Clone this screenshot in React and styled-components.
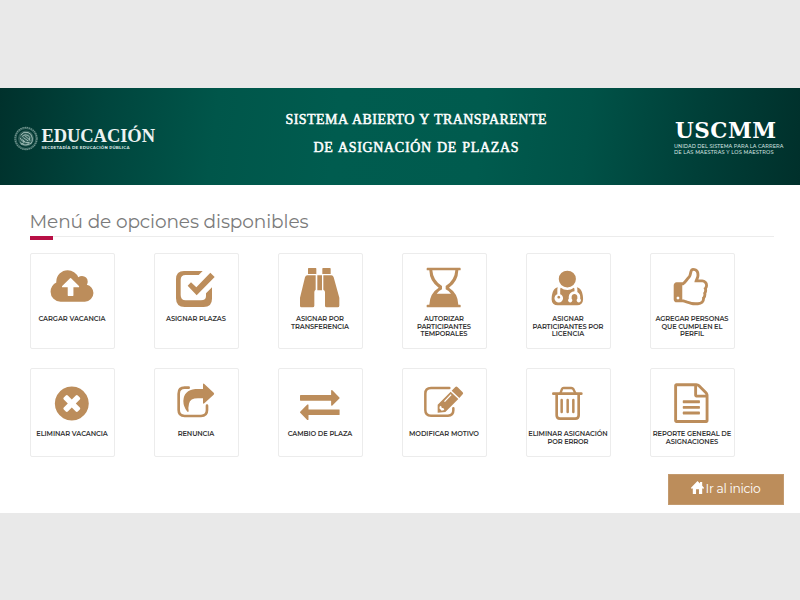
import React, { useLayoutEffect, useRef } from "react";
import styled, { createGlobalStyle } from "styled-components";

const TAN = "#bc8d5b";
const SANS = '"Montserrat", "Inter", "Open Sans", sans-serif';
const SERIF = '"Liberation Serif", serif';

const GlobalStyle = createGlobalStyle`
  *, *::before, *::after { box-sizing: border-box; }
  body { margin: 0; background: #e9e9e9; }
`;

const Page = styled.div`
  width: 800px;
  height: 600px;
  padding-top: 88px;
  overflow: hidden;
  background: #e9e9e9;
`;

const Header = styled.header`
  display: flex;
  height: 97px;
  padding: 0 16px 0 14px;
  background: linear-gradient(97deg, #00312c 0%, #00453d 13%, #00564a 27%, #005c4f 42%, #005b4e 60%, #005247 73%, #003f38 87%, #00302b 100%);
  color: #fff;
`;

const Brand = styled.div`
  display: flex;
  width: 190px;
  padding-top: 38px;
  gap: 3.5px;
`;

const Seal = styled.svg`
  width: 24px;
  height: 25px;
  flex: none;
  color: #9cbab4;
`;

const BrandText = styled.div`
  display: flex;
  flex-direction: column;
`;

const BrandName = styled.div`
  height: 19px;
  padding-top: 1px;
  font: 700 18.5px/19px ${SERIF};
  color: #edf3f2;
`;

const BrandTag = styled.div`
  height: 5px;
  font: 700 4px/5px ${SANS};
  color: #dce8e6;
`;

const Title = styled.h1`
  display: flex;
  flex-direction: column;
  align-items: center;
  flex: 1;
  margin: 0;
  padding: 18px 0 0;
  font: 400 14px/28px ${SERIF};
  word-spacing: 1px;
  -webkit-text-stroke: 0.5px #fff;
`;

const Unit = styled.div`
  width: 156px;
  padding: 30px 0 0 46px;
`;

const UnitName = styled.div`
  height: 26px;
  padding-left: 1px;
  font: 700 21.5px/25px "DejaVu Serif", serif;
`;

const UnitTag = styled.div`
  display: flex;
  flex-direction: column;
  font: 500 5px/5.6px ${SANS};
  color: #d5e3e0;
`;

const Content = styled.main`
  height: 328px;
  padding: 24px 26.4px 0 29.5px;
  background: #fff;
`;

const Heading = styled.h2`
  height: 28px;
  margin: 0;
  border-bottom: 1px solid #ececec;
  font: 400 18.5px/25px ${SANS};
  color: #7b7b7b;
`;

const Accent = styled.div`
  width: 23px;
  height: 4px;
  margin-top: -1px;
  background: #b80f45;
`;

const Grid = styled.div`
  display: grid;
  grid-template-columns: repeat(6, 85px);
  grid-template-rows: 96px 89px;
  gap: 19px 39px;
  margin-top: 13px;
`;

const Card = styled.button`
  display: flex;
  flex-direction: column;
  align-items: center;
  padding: 10px 0 0;
  border: 1px solid #ececec;
  border-radius: 2px;
  background: #fff;
  color: ${TAN};
`;

const Icon = styled.svg`
  width: 48px;
  height: 48px;
  flex: none;
  fill: currentColor;
`;

const Label = styled.span`
  display: flex;
  flex-direction: column;
  align-items: center;
  margin-top: 4.4px;
  font: 600 6.7px/7.2px ${SANS};
  color: #333;
`;

const Actions = styled.div`
  display: flex;
  justify-content: flex-end;
  margin: 17px -10px 0 0;
`;

const HomeButton = styled.button`
  display: flex;
  justify-content: center;
  width: 116px;
  height: 31px;
  padding: 6px 0 0;
  gap: 2px;
  border: 1px solid #c39a6e;
  background: ${TAN};
  color: #fff;
  font: 400 12.3px/15px ${SANS};
`;

const HomeIcon = styled.svg`
  width: 13px;
  height: 13px;
  fill: #fff;
`;

const FitSpan = styled.span`
  display: block;
  width: max-content;
  white-space: nowrap;
`;

// Tracks a single line of text so that it spans the given width.
function Fit({ width, children }) {
  const ref = useRef(null);
  useLayoutEffect(() => {
    const el = ref.current;
    el.style.letterSpacing = "0px";
    const natural = el.getBoundingClientRect().width;
    const gap = (width - natural) / (children.length - 1);
    el.style.letterSpacing = `${gap}px`;
    el.style.marginRight = `${-gap}px`;
  }, [width, children]);
  return <FitSpan ref={ref}>{children}</FitSpan>;
}

const icons = {
  cloud: (
    <path transform="translate(3.4 10) scale(.067)" d="M1344 864q0-14-9-23l-352-352q-9-9-23-9t-23 9l-351 351q-10 12-10 24 0 14 9 23t23 9h224v352q0 13 9.5 22.5t22.5 9.5h192q13 0 22.5-9.5t9.5-22.5v-352h224q13 0 22.5-9.5t9.5-22.5zm640 288q0 159-112.5 271.5t-271.5 112.5h-1088q-185 0-316.5-131.5t-131.5-316.5q0-130 70-240t188-165q-2-30-2-43 0-212 150-362t362-150q156 0 285.5 87t188.5 231q71-62 166-62 106 0 181 75t75 181q0 76-41 138 130 31 213.5 135.5t83.5 238.5z" />
  ),
  check: (
    <>
      <path d="M36 21H92L80 33H41Q26 33 26 48V93Q26 109 41 109H87Q102 109 102 96V88L120 70V104Q120 129 95 129H38Q12 129 12 103V46Q12 21 36 21Z" />
      <path d="M47 65L57 55L73 70L115 26L128 39L74 94Z" />
    </>
  ),
  binoculars: (
    <path d="M38 12h21q2 0 2 2v16H36V14q0-2 2-2zM81 12h21q2 0 2 2v16H79V14q0-2 2-2zM34 34H59V77Q55 79 55 84V125Q55 130 50 130H16Q12 130 12 125V101L27 40Q29 34 34 34zM64 34H78V79H64zM82 34H106Q111 34 113 40L130 101V125Q130 130 125 130H92Q87 130 87 125V84Q87 79 82 77z" />
  ),
  hourglass: (
    <path fillRule="evenodd" d="M22 11H120Q122 11 122 14V17Q122 19 120 19H115Q114 53 87 71Q114 88 115 122H120Q122 122 122 124V128Q122 130 120 130H22Q20 130 20 128V124Q20 122 22 122H28Q29 88 56 71Q29 53 28 19H22Q20 19 20 17V14Q20 11 22 11ZM37 19Q39 50 66 66V76Q57 80 50 89H93Q86 80 77 76V66Q104 50 106 19Z" />
  ),
  doctor: (
    <path transform="translate(10 11.5) scale(.067 .0655)" d="M576 1344q0 26-19 45t-45 19-45-19-19-45 19-45 45-19 45 19 19 45zm1024 109q0 121-73 190t-194 69h-874q-121 0-194-69t-73-190q0-68 5.5-131t24-138 47.5-132.5 81-103 120-60.5q-22 52-22 120v203q-58 20-93 70t-35 111q0 80 56 136t136 56 136-56 56-136q0-61-35.5-111t-92.5-70v-203q0-62 25-93 132 104 295 104t295-104q25 31 25 93v64q-106 0-181 75t-75 181v89q-32 29-32 71 0 40 28 68t68 28 68-28 28-68q0-42-32-71v-89q0-52 38-90t90-38 90 38 38 90v89q-32 29-32 71 0 40 28 68t68 28 68-28 28-68q0-42-32-71v-89q0-68-34.5-127.5t-93.5-93.5q0-10 .5-42.5t0-48-2.5-41.5-7-47-13-40q68 15 120 60.5t81 103 47.5 132.5 24 138 5.5 131zm-320-941q0 159-112.5 271.5t-271.5 112.5-271.5-112.5-112.5-271.5 112.5-271.5 271.5-112.5 271.5 112.5 112.5 271.5z" />
  ),
  thumb: (
    <path transform="translate(8.5 12) scale(.067)" d="M384 1344q0-26-19-45t-45-19-45 19-19 45 19 45 45 19 45-19 19-45zm1152-576q0-51-39-89.5t-89-38.5h-352q0-58 48-159.5t48-160.5q0-98-32-145t-128-47q-26 26-38 85t-30.5 125.5-59.5 109.5q-22 23-77 91-4 5-23 30t-31.5 41-34.5 42.5-40 44-38.5 35.5-40 27-35.5 9h-32v640h32q13 0 31.5 3t33 6.5 38 11 35 11.5 35.5 12.5 29 10.5q211 73 342 73h121q192 0 192-167 0-26-5-56 30-16 47.5-52.5t17.5-73.5-18-69q53-50 53-119 0-25-10-55.5t-25-47.5q32-1 53.5-47t21.5-81zm128-1q0 89-49 163 9 33 9 69 0 77-38 144 3 21 3 43 0 101-60 178 1 139-85 219.5t-227 80.5h-129q-96 0-189.5-22.5t-216.5-65.5q-116-40-138-40h-288q-53 0-90.5-37.5t-37.5-90.5v-640q0-53 37.5-90.5t90.5-37.5h274q36-24 137-155 58-75 107-128 24-25 35.5-85.5t30.5-126.5 62-108q39-37 90-37 84 0 151 32.5t102 101.5 35 186q0 93-48 192h176q104 0 180 76t76 179z" />
  ),
  cancel: (
    <path transform="translate(12 14) scale(.0663)" d="M1277 1122q0-26-19-45l-181-181 181-181q19-19 19-45 0-27-19-46l-90-90q-19-19-46-19-26 0-45 19l-181 181-181-181q-19-19-45-19-27 0-46 19l-90 90q-19 19-19 46 0 26 19 45l181 181-181 181q-19 19-19 45 0 27 19 46l90 90q19 19 46 19 26 0 45-19l181-181 181 181q19 19 45 19 27 0 46-19l90-90q19-19 19-46zm387-226q0 209-103 385.5t-279.5 279.5-385.5 103-385.5-103-279.5-279.5-103-385.5 103-385.5 279.5-279.5 385.5-103 385.5 103 279.5 279.5 103 385.5z" />
  ),
  share: (
    <>
      <path fill="none" stroke="currentColor" strokeWidth="8" strokeLinecap="round" d="M50 26H38Q20 26 20 44V93Q20 111 38 111H87Q105 111 105 93V80" />
      <path d="M93 16Q93 12 97 15L125 41Q128 44 125 47L97 73Q93 76 93 71V58H78Q54 58 51 74Q48 86 50 96Q49 101 45 97Q34 82 34 66Q35 34 70 30H93Z" />
    </>
  ),
  exchange: (
    <path transform="translate(12 14) scale(.0663 .067)" d="M1792 1184v192q0 13-9.5 22.5t-22.5 9.5h-1376v192q0 13-9.5 22.5t-22.5 9.5q-12 0-24-10l-319-320q-9-9-9-22 0-14 9-23l320-320q9-9 23-9 13 0 22.5 9.5t9.5 22.5v192h1376q13 0 22.5 9.5t9.5 22.5zm0-544q0 14-9 23l-320 320q-9 9-23 9-13 0-22.5-9.5t-9.5-22.5v-192h-1376q-13 0-22.5-9.5t-9.5-22.5v-192q0-13 9.5-22.5t22.5-9.5h1376v-192q0-14 9-23t23-9q12 0 24 10l319 319q9 9 9 23z" />
  ),
  edit: (
    <>
      <path fill="none" stroke="currentColor" strokeWidth="7.5" strokeLinecap="round" d="M88 27H33Q16 27 16 44V93Q16 110 33 110H84Q100 110 100 94V88" />
      <path fillRule="evenodd" d="M92 38L115 60L76 99L53 101V77ZM60 80L58 88L65 95L73 93L70 87H65V83ZM72 67L92 46L95 48L75 69Z" />
      <path d="M95 35L106 24Q109 21 113 25L128 40Q131 43 128 46L118 57Z" />
    </>
  ),
  trash: (
    <g fill="none" stroke="currentColor" strokeLinecap="round" strokeLinejoin="round">
      <path strokeWidth="8" d="M28 44H112" />
      <path strokeWidth="7" d="M49 43L54 30Q55 27 59 27H82Q86 27 88 30L94 43" />
      <path strokeWidth="8" d="M38 46V109Q38 119 48 119H94Q104 119 104 109V46" />
      <path strokeWidth="7.5" d="M53 63V99M71 63V99M88 63V99" />
    </g>
  ),
  report: (
    <path transform="translate(10 13) scale(.067 .0663)" fillRule="evenodd" d="M1596 380q28 28 48 76t20 88v1152q0 40-28 68t-68 28h-1344q-40 0-68-28t-28-68v-1600q0-40 28-68t68-28h896q40 0 88 20t76 48zm-444-244v376h376q-10-29-22-41l-313-313q-12-12-41-22zm384 1528v-1024h-416q-40 0-68-28t-28-68v-416h-768v1536h1280zm-1024-864q0-14 9-23t23-9h704q14 0 23 9t9 23v64q0 14-9 23t-23 9h-704q-14 0-23-9t-9-23v-64zm736 224q14 0 23 9t9 23v64q0 14-9 23t-23 9h-704q-14 0-23-9t-9-23v-64q0-14 9-23t23-9h704zm0 256q14 0 23 9t9 23v64q0 14-9 23t-23 9h-704q-14 0-23-9t-9-23v-64q0-14 9-23t23-9h704z" />
  ),
};

const options = [
  { icon: "cloud", lines: [["CARGAR VACANCIA", 67]] },
  { icon: "check", lines: [["ASIGNAR PLAZAS", 60]] },
  { icon: "binoculars", lines: [["ASIGNAR POR", 48], ["TRANSFERENCIA", 58]] },
  { icon: "hourglass", lines: [["AUTORIZAR", 40], ["PARTICIPANTES", 54], ["TEMPORALES", 47]] },
  { icon: "doctor", lines: [["ASIGNAR", 31.5], ["PARTICIPANTES POR", 71], ["LICENCIA", 32.5]] },
  { icon: "thumb", lines: [["AGREGAR PERSONAS", 73], ["QUE CUMPLEN EL", 61], ["PERFIL", 24]] },
  { icon: "cancel", lines: [["ELIMINAR VACANCIA", 71.5]] },
  { icon: "share", lines: [["RENUNCIA", 36.5]] },
  { icon: "exchange", lines: [["CAMBIO DE PLAZA", 64.5]] },
  { icon: "edit", lines: [["MODIFICAR MOTIVO", 70]] },
  { icon: "trash", lines: [["ELIMINAR ASIGNACIÓN", 79.5], ["POR ERROR", 41]] },
  { icon: "report", lines: [["REPORTE GENERAL DE", 78.5], ["ASIGNACIONES", 52.5]] },
];

export default function App() {
  return (
    <Page>
      <GlobalStyle />
      <Header>
        <Brand>
          <Seal viewBox="0 0 72 74" fill="none" stroke="currentColor">
            <circle cx="36" cy="37" r="33" strokeWidth="4" strokeDasharray="5 1.5" opacity=".7" />
            <circle cx="36" cy="37" r="30" strokeWidth="3" opacity=".4" />
            <circle cx="36" cy="37" r="24" fill="currentColor" stroke="none" opacity=".3" />
            <path d="M20 27Q29 14 42 19Q53 22 55 36Q57 46 49 54M24 31Q33 22 43 28Q51 34 45 43M18 35Q22 46 33 48M28 34L42 44M32 28L49 43M25 40Q34 53 46 49M18 49Q31 63 52 51M22 55L30 49M38 57L45 49" strokeWidth="3" />
          </Seal>
          <BrandText>
            <BrandName><Fit width={113.5}>EDUCACIÓN</Fit></BrandName>
            <BrandTag><Fit width={88}>SECRETARÍA DE EDUCACIÓN PÚBLICA</Fit></BrandTag>
          </BrandText>
        </Brand>
        <Title>
          <Fit width={261}>SISTEMA ABIERTO Y TRANSPARENTE</Fit>
          <Fit width={205}>DE ASIGNACIÓN DE PLAZAS</Fit>
        </Title>
        <Unit>
          <UnitName><Fit width={101}>USCMM</Fit></UnitName>
          <UnitTag>
            <Fit width={109.5}>UNIDAD DEL SISTEMA PARA LA CARRERA</Fit>
            <Fit width={99.5}>DE LAS MAESTRAS Y LOS MAESTROS</Fit>
          </UnitTag>
        </Unit>
      </Header>
      <Content>
        <Heading><Fit width={279}>Menú de opciones disponibles</Fit></Heading>
        <Accent />
        <Grid>
          {options.map(({ icon, lines }) => (
            <Card key={icon}>
              <Icon viewBox="0 0 144 144">{icons[icon]}</Icon>
              <Label>
                {lines.map(([text, width]) => <Fit key={text} width={width}>{text}</Fit>)}
              </Label>
            </Card>
          ))}
        </Grid>
        <Actions>
          <HomeButton>
            <HomeIcon viewBox="0 0 36 36">
              <path d="M18 0L25 7V3H31V13L36 19V21H31V36H22V23H14V36H5V21H0V19Z" />
            </HomeIcon>
            <Fit width={55}>Ir al inicio</Fit>
          </HomeButton>
        </Actions>
      </Content>
    </Page>
  );
}
